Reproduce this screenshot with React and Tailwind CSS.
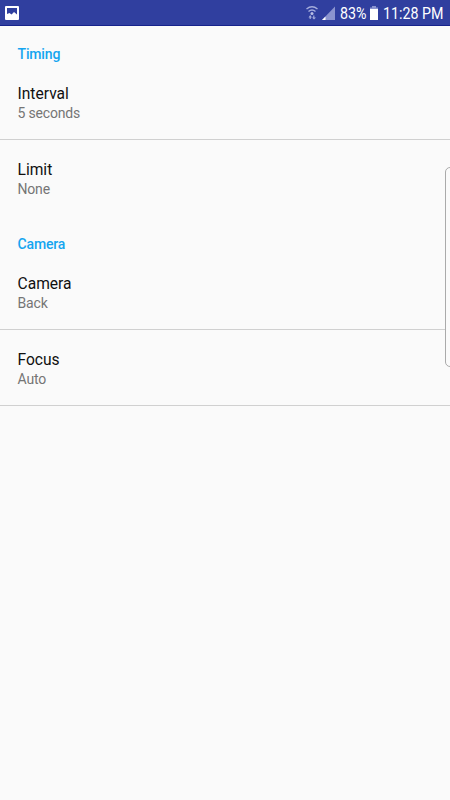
function Item({ title, value, last }) {
  return (
    <div className={last ? "h-[75px] pt-[20px] px-[17.5px]" : "h-[76px] border-b border-[#d0d0d0] pt-[20px] px-[17.5px]"}>
      <div className="text-[15.6px] leading-5 text-[#101010]">{title}</div>
      <div className="text-[14px] leading-[18px] tracking-[-0.18px] text-[#757575]">{value}</div>
    </div>
  );
}

function Heading({ children }) {
  return <h2 className="h-[20px] px-[17.5px] text-[14px] leading-[21px] font-medium tracking-[-0.15px] text-[#14a5f0]">{children}</h2>;
}

export default function App() {
  return (
    <div className="relative h-[800px] w-[450px] overflow-hidden bg-[#fafafa] font-['Roboto',sans-serif]">
      <header className="flex h-[26px] items-center border-b border-[#16238c] bg-[#303f9f] text-white">
        <svg className="ml-[5px]" width="14" height="14" viewBox="0 0 14 14">
          <path fillRule="evenodd" fill="white" d="M1 0h12q1 0 1 1v12q0 1-1 1H1q-1 0-1-1V1q0-1 1-1zM2 2v6l2.500-1 2 1.500 2.500-2.500 3 2.500V2z" />
        </svg>
        <div className="ml-auto flex items-center pr-[7px]">
          <svg width="30" height="16" viewBox="0 0 30 16">
            <path d="M.5 4q5.500-4.500 11 0M2.500 6.500q3.500-3 7 0" fill="none" stroke="#a5addc" strokeWidth="1.400" />
            <circle cx="6" cy="8.500" r="1.500" fill="#b9bfe5" />
            <path d="M2.500 12.500L4.200 10 6 12.500H4.800V14H3.600v-1.500zM6 12.500h1.200V10.500h1.200v2H10L8 14.500z" fill="#a5addc" />
            <path d="M29 1.500V15H16z" fill="#8b94cf" />
            <path d="M19.500 11.500V15H16z" fill="white" />
          </svg>
          <span className="ml-[4px] w-[27px] origin-left scale-x-[0.89] pt-[2px] text-[16px] leading-6 whitespace-nowrap">83%</span>
          <svg className="ml-[3px]" width="8" height="14" viewBox="0 0 8 14">
            <path d="M2 0h4v1.500h2V3H0V1.500h2z" fill="#8b94cf" />
            <path d="M0 3h8v11H0z" fill="white" />
          </svg>
          <span className="ml-[5px] w-[60px] origin-left scale-x-[0.89] pt-[2px] text-[16px] leading-6 whitespace-nowrap">11:28 PM</span>
        </div>
      </header>
      <main className="pt-[18px]">
        <Heading>Timing</Heading>
        <Item title="Interval" value="5 seconds" />
        <Item title="Limit" value="None" last />
        <div className="h-[19px]" />
        <Heading>Camera</Heading>
        <Item title="Camera" value="Back" />
        <Item title="Focus" value="Auto" />
      </main>
      <div className="absolute top-[167px] left-[444.500px] h-[200px] w-[10px] rounded-[5px] border border-[#aaaaaa] bg-[#fafafa]" />
    </div>
  );
}
